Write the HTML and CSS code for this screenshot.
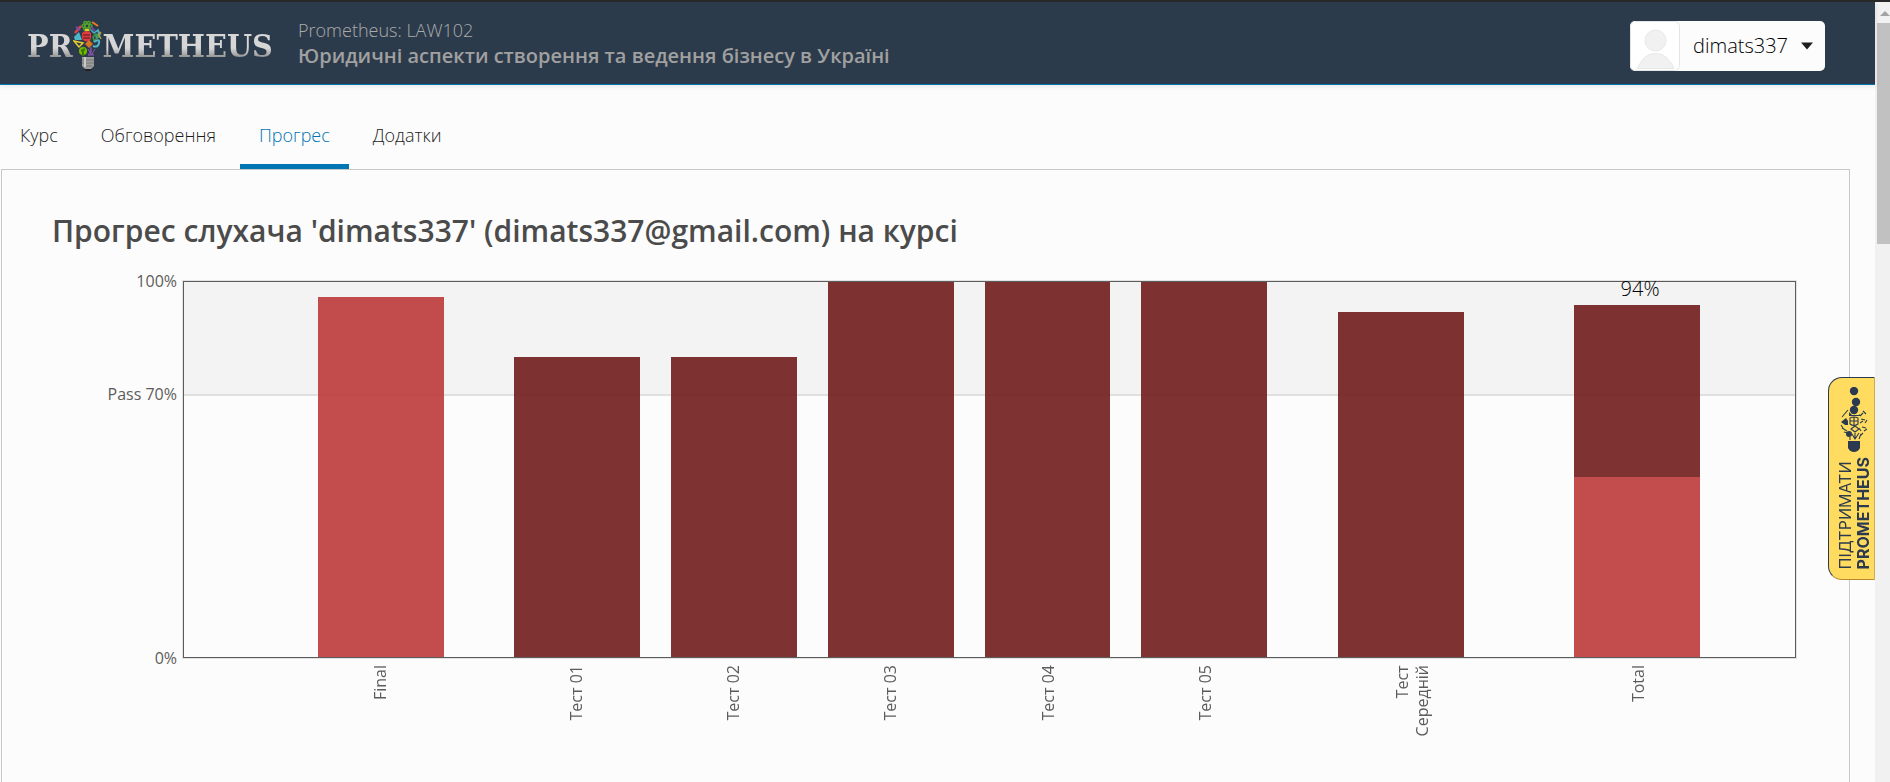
FILE: index.html
```html
<!DOCTYPE html>
<html lang="uk">
<head>
<meta charset="utf-8">
<title>Прогрес | LAW102 | Prometheus</title>
<link rel="stylesheet" href="styles.css">
</head>
<body>
<div class="viewport">
  <div class="page">
    <header class="header">
      <a class="logo" href="#" aria-label="Prometheus">
        <span class="logo-text">PR</span>
        <svg class="logo-bulb" viewBox="0 0 30 52" width="30" height="52" fill="none" stroke-width="1.5" aria-hidden="true">
          <g stroke="#4da32b"><ellipse cx="14" cy="6" rx="5" ry="2"/><ellipse cx="14" cy="6" rx="5" ry="2" transform="rotate(60 14 6)"/><ellipse cx="14" cy="6" rx="5" ry="2" transform="rotate(120 14 6)"/></g>
          <path d="M2 13l6-7" stroke="#e8414b" stroke-width="2.5"/><path d="M3 7l4 3" stroke="#7b4fa5" stroke-width="2"/>
          <path d="M19 2l6 4" stroke="#ee7a22" stroke-width="2"/><path d="M18 7l4 4" stroke="#7046a0" stroke-width="2"/>
          <path d="M1 17l5-5 3 8-7 0z" fill="#4cb7c9"/><path d="M12 10h4" stroke="#e8c82e" stroke-width="2"/>
          <path d="M9 13q5-4 9 0v6q-4 5-9 0z" fill="#e23b3b"/><path d="M10 15h7M10 18h7" stroke="#7d2630"/>
          <path d="M18 10l3 3 4-3 2 4-4 2 1 3M25 9l1 9" stroke="#45adbd"/>
          <path d="M28 12l-2 3 2 4" stroke="#b59b33"/><path d="M20 17l3-3 2 3-4 4z" stroke="#3e9a43"/>
          <path d="M1 21l9 2-4 4z" stroke="#e6cd32"/><path d="M12 24l4-4 4 4-4 4z" fill="#d97420"/>
          <path d="M21 22q6-4 5 1t-6 3" stroke="#50b7cc" stroke-width="2"/>
          <circle cx="10" cy="31" r="4" fill="#77b800"/><path d="M10 31v5M8 31l4-2" stroke="#397800" stroke-width="2"/>
          <path d="M15 35q3-1 3-7M18 35v-8M19 35q1-4 3-6M15 29l3 5M15 35h6" stroke="#8e55b8" stroke-width="1"/>
          <path d="M9 37h12v9l-3 3h-6l-3-3z" fill="#9c9c9c"/><path d="M9 40h12M9 43h12M11 46h8" stroke="#777" stroke-width="1"/><path d="M12 37v10" stroke="#c9c9c9" stroke-width="2"/><path d="M11 49h8l-2 2h-4z" fill="#222"/>
        </svg>
        <span class="logo-text">METHEUS</span>
      </a>
      <div class="course">
        <span class="course-code">Prometheus: LAW102</span>
        <span class="course-name">Юридичні аспекти створення та ведення бізнесу в Україні</span>
      </div>
      <button class="user-menu" type="button">
        <svg class="avatar" viewBox="0 0 50 50" width="50" height="50" aria-hidden="true">
          <rect x=".5" y=".5" width="49" height="49" rx="5" fill="#fff" stroke="#e4e4e4"/>
          <g fill="#f1f1f1" stroke="#e8e8e8"><circle cx="25.500" cy="19.500" r="10.500"/><path d="M7.500 47.500C12 37 18 32.500 25.500 32.500S39.500 37 44 47.500z"/></g>
        </svg>
        <span class="user-name">dimats337</span>
        <svg class="caret" viewBox="0 0 12 8" width="12" height="8" aria-hidden="true"><path d="M0 .5h12l-6 7z" fill="#1f1f1f"/></svg>
      </button>
    </header>

    <nav class="tabs">
      <a class="tab" href="#">Курс</a>
      <a class="tab" href="#">Обговорення</a>
      <a class="tab tab-active" href="#" aria-current="page">Прогрес</a>
      <a class="tab" href="#">Додатки</a>
    </nav>

    <main class="panel">
      <h1 class="title">Прогрес слухача 'dimats337' (dimats337@gmail.com) на курсі</h1>
      <section class="chart" aria-label="Прогрес">
        <div class="y-axis"><span>100%</span><span>Pass 70%</span><span>0%</span></div>
        <div class="plot columns">
          <div class="bar final" style="height:96%"></div>
          <div class="bar test" style="height:80%"></div>
          <div class="bar test" style="height:80%"></div>
          <div class="bar test" style="height:100%"></div>
          <div class="bar test" style="height:100%"></div>
          <div class="bar test" style="height:100%"></div>
          <div class="bar test" style="height:92%"></div>
          <div class="bar stack" style="height:94%">
            <span class="total">94%</span>
            <div class="test" style="flex-grow:46"></div>
            <div class="final" style="flex-grow:48"></div>
          </div>
        </div>
        <div class="x-axis columns">
          <div class="tick"><span>Final</span></div>
          <div class="tick"><span>Тест 01</span></div>
          <div class="tick"><span>Тест 02</span></div>
          <div class="tick"><span>Тест 03</span></div>
          <div class="tick"><span>Тест 04</span></div>
          <div class="tick"><span>Тест 05</span></div>
          <div class="tick"><span>Тест<br>Середній</span></div>
          <div class="tick"><span>Total</span></div>
        </div>
      </section>
    </main>

    <a class="support" href="#">
      <svg viewBox="0 0 30 66" width="30" height="66" fill="none" stroke="#2b3a4f" stroke-width="1.100" aria-hidden="true">
        <g fill="#2b3a4f" stroke="none"><circle cx="15" cy="4" r="4.200"/><circle cx="17" cy="15" r="4.200"/><circle cx="15" cy="23" r="4.200"/><path d="M10 25l3 3h7l1-1v2H10zM2 35l5-4 2 3v4H6zM9 54h12v7q-2 4-6 4t-6-4z"/><circle cx="10" cy="47" r="3"/></g>
        <path d="M3 30l6-7M11 31q4-2 8 0v6q-4 3-8 0zM11 34h8M15 30v8M21 29l3-3M24 24l3 3M22 32l4 1M26 36l2-3M21 36l3-2M23 40l4 1M20 41l2 3M25 44l3-2M3 41l5 3M5 45l4 1M12 42l4-3 4 3-4 3zM16 52v-6M13 47l3 5 4-6M20 52l2-5M11 50v3M24 46l-3 3M2 38l2 3"/>
      </svg>
      <span class="support-text">ПІДТРИМАТИ<br><b>PROMETHEUS</b></span>
    </a>
  </div>
  <div class="scrollbar" aria-hidden="true"><span class="scroll-up"></span><span class="scroll-thumb"></span></div>
</div>
</body>
</html>
```

FILE: styles.css
```css
* { box-sizing: border-box; }

body {
  margin: 0;
  background: #fcfcfc;
  color: #1c1c1c;
  font-family: "Open Sans", "Noto Sans", sans-serif;
  font-size: 18px;
  line-height: 24px;
}

a { color: inherit; text-decoration: none; }

.viewport {
  display: flex;
  height: 100vh;
  overflow: hidden;
  border-top: 2px solid #282828;
}

.page {
  position: relative;
  display: flex;
  flex: 1;
  flex-direction: column;
  min-width: 0;
}

.header {
  display: flex;
  align-items: center;
  height: 83px;
  flex: none;
  padding: 6px 50px 0 27px;
  background: #2c3b4b;
  border-bottom: 1px solid #0075b4;
  box-shadow: 0 1px 6px rgba(0, 0, 0, .1);
}

.logo { display: flex; align-items: center; width: 271px; }

.logo-text {
  font: bold 32px/40px "DejaVu Serif Condensed", "DejaVu Serif", serif;
  font-stretch: condensed;
  color: transparent;
  background: linear-gradient(#d6d6d6 55%, #8d8d8d 80%);
  -webkit-background-clip: text;
  background-clip: text;
}

.logo-bulb { flex: none; }

.course {
  display: flex;
  flex: 1;
  flex-direction: column;
  gap: 2px;
  padding-bottom: 6px;
  color: #a0a0a0;
}

.course-code { color: #ababab; font-weight: 300; }
.course-name { font-size: 20px; font-weight: 600; }

.user-menu {
  display: flex;
  align-items: center;
  gap: 13px;
  padding: 0 12px 0 0;
  border: 0;
  border-radius: 5px;
  background: #fcfcfc;
  color: #000;
  font: 300 20px/24px "Open Sans", sans-serif;
}

.tabs { display: flex; flex: none; gap: 5px; height: 84px; padding-left: 1px; }

.tab {
  display: flex;
  align-items: center;
  padding: 26px 19px 6px;
  border-bottom: 5px solid transparent;
  font-weight: 300;
}

.tab-active { color: #0075b4; border-color: #0075b4; }

.panel {
  flex: 1;
  margin: 0 25px 0 1px;
  padding: 40px 53px 0 50px;
  border: 1px solid #c8c8c8;
  border-bottom: 0;
}

.title {
  margin: 0 0 29px;
  color: #4b4b4b;
  font-size: 30px;
  font-weight: 600;
  line-height: 42px;
}

.chart {
  display: grid;
  grid-template-columns: 131px 1fr;
  color: #5c5c5c;
  font-size: 16px;
  line-height: 20px;
}

.y-axis {
  display: grid;
  grid-template-rows: 3fr 7fr 0;
  padding-right: 6px;
  text-align: right;
}

.y-axis span { display: flex; align-items: center; justify-content: flex-end; height: 0; }

/* Bars and tick labels share one set of columns, with a spacer before each bar. */
.columns {
  display: grid;
  grid-template-columns: 134fr 126fr 70fr 126fr 31fr 126fr 31fr 126fr 31fr 126fr 31fr 126fr 71fr 126fr 110fr 126fr 95fr;
}

.columns > :nth-child(1) { grid-column: 2; }
.columns > :nth-child(2) { grid-column: 4; }
.columns > :nth-child(3) { grid-column: 6; }
.columns > :nth-child(4) { grid-column: 8; }
.columns > :nth-child(5) { grid-column: 10; }
.columns > :nth-child(6) { grid-column: 12; }
.columns > :nth-child(7) { grid-column: 14; }
.columns > :nth-child(8) { grid-column: 16; }

.plot {
  align-items: end;
  height: 377px;
  border: 1px solid #5c5c5c;
  box-shadow: 0 0 0 1px #e2e2e2;
  background: linear-gradient(#f3f3f3 30%, #e0e0e0 30%, #e0e0e0 calc(30% + 2px), transparent 0);
}

.final { background: rgba(189, 56, 56, .9); }
.test { background: rgba(113, 28, 28, .9); }

.stack { position: relative; display: flex; flex-direction: column; }

.total {
  position: absolute;
  inset: -28px 0 auto;
  padding-left: 6px;
  color: #000;
  font-size: 20px;
  font-weight: 300;
  line-height: 24px;
  text-align: center;
}

.x-axis { grid-column: 2; padding-top: 7px; }

.tick { padding-left: calc(50% - 10px); white-space: nowrap; }

.tick span {
  display: block;
  writing-mode: vertical-rl;
  transform: rotate(180deg);
  width: max-content;
  text-align: right;
}

.support {
  position: absolute;
  top: 375px;
  right: 0;
  display: flex;
  flex-direction: column;
  align-items: center;
  gap: 4px;
  width: 47px;
  height: 203px;
  padding: 9px 0 0 4px;
  border: 1px solid #2b3a4f;
  border-right-color: #c9ae50;
  border-bottom-color: #b98a2c;
  border-radius: 14px 0 0 14px;
  background: #ffdc5f;
  color: #2b3a4f;
}

.support svg { flex: none; }

.support-text {
  writing-mode: vertical-rl;
  transform: rotate(180deg);
  font: 400 16px/18px Inter, sans-serif;
}

.scrollbar {
  display: flex;
  flex-direction: column;
  align-items: flex-end;
  width: 15px;
  background: #f1f1f1;
}

.scroll-up {
  height: 14px;
  margin-bottom: 7px;
  border: 5px solid transparent;
  border-top-width: 4px;
  border-bottom-color: #a3a3a3;
}

.scroll-thumb { width: 13px; height: 221px; background: #c1c1c1; }
```
